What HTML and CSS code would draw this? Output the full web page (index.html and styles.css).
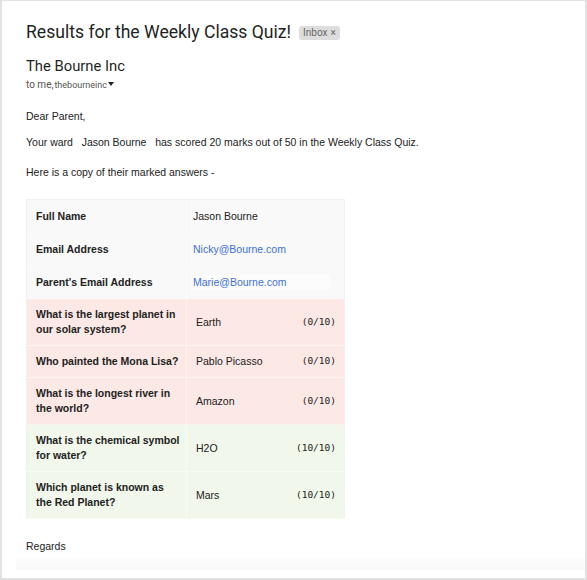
FILE: index.html
```html
<!DOCTYPE html>
<html>
<head>
<meta charset="utf-8">
<link rel="stylesheet" href="styles.css">
</head>
<body>
<div class="frame">
  <div class="subject-row">
    <h1 class="subject">Results for the Weekly Class Quiz!</h1>
    <span class="label">Inbox <span class="label-x">×</span></span>
  </div>
  <div class="sender">The Bourne Inc</div>
  <div class="recipients">to me, <span class="small">thebourneinc</span><svg class="caret" width="6" height="4" viewBox="0 0 6 4"><path d="M0 0h6L3 4z" fill="#222"/></svg></div>

  <p class="greeting">Dear Parent,</p>
  <p class="line">Your ward &nbsp;&nbsp;Jason Bourne &nbsp;&nbsp;has scored 20 marks out of 50 in the Weekly Class Quiz.</p>
  <p class="line2">Here is a copy of their marked answers -</p>

  <table class="results">
    <tr class="info">
      <th>Full Name</th>
      <td><span class="val">Jason Bourne</span></td>
    </tr>
    <tr class="info">
      <th>Email Address</th>
      <td><span class="val link">Nicky@Bourne.com</span></td>
    </tr>
    <tr class="info">
      <th>Parent's Email Address</th>
      <td><span class="val link boxed">Marie@Bourne.com</span></td>
    </tr>
    <tr class="wrong">
      <th>What is the largest planet in our solar system?</th>
      <td><div class="ans"><span>Earth</span><span class="score">(0/10)</span></div></td>
    </tr>
    <tr class="wrong">
      <th>Who painted the Mona Lisa?</th>
      <td><div class="ans"><span>Pablo Picasso</span><span class="score">(0/10)</span></div></td>
    </tr>
    <tr class="wrong">
      <th>What is the longest river in the world?</th>
      <td><div class="ans"><span>Amazon</span><span class="score">(0/10)</span></div></td>
    </tr>
    <tr class="right">
      <th>What is the chemical symbol for water?</th>
      <td><div class="ans"><span>H2O</span><span class="score">(10/10)</span></div></td>
    </tr>
    <tr class="right">
      <th>Which planet is known as the Red Planet?</th>
      <td><div class="ans"><span>Mars</span><span class="score">(10/10)</span></div></td>
    </tr>
  </table>

  <p class="regards">Regards</p>
  <div class="footer-strip"></div>
</div>
</body>
</html>
```

FILE: styles.css
```css
* { box-sizing: border-box; }
html, body { margin: 0; padding: 0; background: #fff; }
.frame {
  width: 587px;
  height: 580px;
  border-top: 1px solid #e2e2e2;
  border-left: 2px solid #e2e2e2;
  border-right: 2px solid #e2e2e2;
  border-bottom: 2px solid #e2e2e2;
  padding: 19px 0 0 24px;
  font-family: "Liberation Sans", Arial, sans-serif;
  font-size: 10.5px;
  color: #222;
  overflow: hidden;
}
.subject-row {
  display: flex;
  align-items: center;
  height: 24px;
}
.subject {
  margin: 0;
  font-family: Roboto, "Open Sans", sans-serif;
  font-weight: 400;
  font-size: 17.6px;
  line-height: 24px;
  color: #1f1f1f;
}
.label {
  margin-left: 8px;
  margin-top: 1px;
  background: #dddddd;
  color: #666;
  border-radius: 3px;
  height: 14px;
  line-height: 14px;
  padding: 0 4px 0 4px;
  font-family: Roboto, sans-serif;
  font-size: 10px;
  display: inline-flex;
  align-items: center;
}
.label-x { margin-left: 3px; font-size: 10px; }
.sender {
  margin-top: 12px;
  font-family: Roboto, sans-serif;
  font-size: 14.8px;
  line-height: 20px;
  color: #1f1f1f;
}
.recipients {
  margin-top: 2px;
  font-family: Roboto, sans-serif;
  font-size: 10px;
  line-height: 14px;
  color: #555;
  display: flex;
  align-items: center;
}
.recipients .small { font-size: 9px; margin-left: 1px; }
.caret { margin-left: 1px; margin-top: -2px; }
p { margin: 0; line-height: 15px; }
.greeting { margin-top: 17px; }
.line { margin-top: 11px; }
.line2 { margin-top: 15px; }
.results {
  margin-top: 19px;
  width: 319px;
  border-collapse: collapse;
  border: 1px solid #f0f0f0;
}
.results th, .results td {
  padding: 8px 9px;
  line-height: 15px;
  text-align: left;
  vertical-align: middle;
  border-bottom: 1px solid #fafafa;
}
.results th {
  width: 160px;
  padding-right: 5px;
  font-weight: 700;
  border-right: 1px solid #fcfcfc;
}
.results tr.info th, .results tr.info td { background: #f9f9f9; height: 33px; }
.results tr.info td { padding-left: 6px; }
.results tr.wrong th, .results tr.wrong td { background: #fce8e5; border-bottom-color: #fdf3f2; border-right-color: #fdf3f2; }
.results tr.right th, .results tr.right td { background: #f1f7ea; border-bottom-color: #f7fbf3; border-right-color: #f7fbf3; }
.val { display: inline-block; }
.link { color: #3d70d6; }
.boxed { background: #fcfcfc; width: 137px; }
.ans {
  display: flex;
  justify-content: space-between;
  align-items: center;
}
.score {
  font-family: "DejaVu Sans Mono", "Liberation Mono", monospace;
  font-size: 9.5px;
  margin-right: -1px;
  margin-top: -2px;
}
.regards { margin-top: 20px; }
.footer-strip {
  margin-top: 3px;
  margin-left: -10px;
  height: 13px;
  background: linear-gradient(#fdfdfd, #f8f8f8);
}
```
